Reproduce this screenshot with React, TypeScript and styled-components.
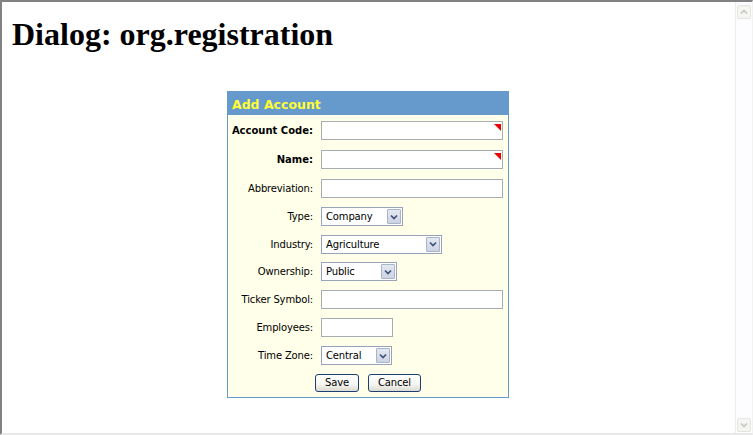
import React from "react";
import styled, { createGlobalStyle } from "styled-components";

const GlobalStyle = createGlobalStyle`
  html, body {
    margin: 0;
    padding: 0;
    background: #ffffff;
    overflow: hidden;
  }
`;

const Frame = styled.div`
  box-sizing: border-box;
  width: 753px;
  height: 435px;
  display: flex;
  border-top: 2px solid #828282;
  border-left: 2px solid #828282;
  border-right: 1px solid #f2f2f2;
  border-bottom: 2px solid #e9e9e9;
  background: #ffffff;
`;

const Page = styled.div`
  flex: 1;
  min-width: 0;
  padding: 14px 11px 0 10px;
`;

const Heading = styled.h1`
  margin: 0 0 38px;
  font-family: "Liberation Serif", "Times New Roman", serif;
  font-size: 32px;
  font-weight: bold;
  line-height: 37px;
  color: #000;
`;

const Dialog = styled.div`
  box-sizing: border-box;
  width: 282px;
  margin: 0 auto;
  border: 1px solid #6699cc;
  background: #ffffea;
  font-family: "DejaVu Sans", Tahoma, sans-serif;
  font-size: 10px;
  color: #000;
`;

const DialogTitle = styled.div`
  height: 23px;
  line-height: 23px;
  padding: 1px 0 0 4px;
  box-sizing: border-box;
  background: #6699cc;
  color: #ffff33;
  font-size: 12.5px;
  font-weight: bold;
`;

const Form = styled.div`
  padding-top: 1px;
`;

const Row = styled.div<{ $h: number }>`
  display: grid;
  grid-template-columns: 85px 1fr;
  column-gap: 8px;
  align-items: center;
  height: ${(p) => p.$h}px;
`;

const Label = styled.label<{ $required?: boolean }>`
  text-align: right;
  white-space: nowrap;
  font-weight: ${(p) => (p.$required ? "bold" : "normal")};
  letter-spacing: ${(p) => (p.$required ? "0" : "-0.15px")};
`;

const Field = styled.div<{ $w: number }>`
  position: relative;
  width: ${(p) => p.$w}px;
`;

const TextInput = styled.input`
  box-sizing: border-box;
  display: block;
  width: 100%;
  height: 19px;
  margin: 0;
  padding: 0 3px;
  border: 1px solid #a5acb2;
  background: #ffffff;
  font: inherit;
  outline: none;
`;

const RequiredMark = styled.span`
  position: absolute;
  top: 3px;
  right: 2px;
  width: 0;
  height: 0;
  border-top: 7px solid #ee0000;
  border-left: 7px solid transparent;
  pointer-events: none;
`;

const SelectBox = styled.div<{ $w: number }>`
  box-sizing: border-box;
  width: ${(p) => p.$w}px;
  height: 19px;
  display: flex;
  align-items: center;
  justify-content: space-between;
  border: 1px solid #97a3b8;
  background: #ffffff;
  padding: 0 1px 0 4px;
  letter-spacing: -0.15px;
`;

const SelectArrow = styled.span`
  box-sizing: border-box;
  width: 14px;
  height: 15px;
  display: flex;
  align-items: center;
  justify-content: center;
  border: 1px solid #aab4c8;
  border-radius: 1px;
  background: linear-gradient(#e4e8f2, #ccd3e3);
`;

const ButtonRow = styled.div`
  display: flex;
  justify-content: center;
  align-items: center;
  gap: 9px;
  height: 28px;
`;

const Button = styled.button`
  box-sizing: border-box;
  height: 18px;
  padding: 0 9px;
  margin: 0;
  border: 1px solid #1c3f73;
  border-radius: 3px;
  background: linear-gradient(#ffffff 0%, #f4f4f0 60%, #dcdad0 100%);
  font-family: "DejaVu Sans", Tahoma, sans-serif;
  font-size: 10px;
  letter-spacing: -0.15px;
  color: #000;
  line-height: 16px;
`;

const Scrollbar = styled.div`
  box-sizing: border-box;
  width: 17px;
  display: flex;
  flex-direction: column;
  justify-content: space-between;
  align-items: center;
  padding: 3px 0 1px;
  border-left: 1px solid #ececec;
  background: #fdfcff;
`;

const ScrollButton = styled.div`
  box-sizing: border-box;
  width: 14px;
  height: 14px;
  display: flex;
  align-items: center;
  justify-content: center;
  border: 1px solid #e4e4e0;
  border-radius: 2px;
  background: #f5f5f1;
`;

const Chevron = ({ up, color, size }: { up?: boolean; color: string; size: number }) => (
  <svg width={size} height={size} viewBox="0 0 8 8">
    <path
      d={up ? "M1 5.5 L4 2.5 L7 5.5" : "M1 2.5 L4 5.5 L7 2.5"}
      fill="none"
      stroke={color}
      strokeWidth={1.7}
    />
  </svg>
);

const Select = ({ value, w }: { value: string; w: number }) => (
  <SelectBox $w={w}>
    <span>{value}</span>
    <SelectArrow>
      <Chevron color="#3f5278" size={8} />
    </SelectArrow>
  </SelectBox>
);

export default function App() {
  return (
    <>
      <GlobalStyle />
      <Frame>
        <Page>
          <Heading>Dialog: org.registration</Heading>
          <Dialog>
            <DialogTitle>Add Account</DialogTitle>
            <Form>
              <Row $h={29}>
                <Label $required>Account Code:</Label>
                <Field $w={182}>
                  <TextInput />
                  <RequiredMark />
                </Field>
              </Row>
              <Row $h={29}>
                <Label $required>Name:</Label>
                <Field $w={182}>
                  <TextInput />
                  <RequiredMark />
                </Field>
              </Row>
              <Row $h={29}>
                <Label>Abbreviation:</Label>
                <Field $w={182}>
                  <TextInput />
                </Field>
              </Row>
              <Row $h={27}>
                <Label>Type:</Label>
                <Select value="Company" w={82} />
              </Row>
              <Row $h={28}>
                <Label>Industry:</Label>
                <Select value="Agriculture" w={121} />
              </Row>
              <Row $h={27}>
                <Label>Ownership:</Label>
                <Select value="Public" w={76} />
              </Row>
              <Row $h={28}>
                <Label>Ticker Symbol:</Label>
                <Field $w={182}>
                  <TextInput />
                </Field>
              </Row>
              <Row $h={29}>
                <Label>Employees:</Label>
                <Field $w={72}>
                  <TextInput />
                </Field>
              </Row>
              <Row $h={27}>
                <Label>Time Zone:</Label>
                <Select value="Central" w={71} />
              </Row>
              <ButtonRow>
                <Button>Save</Button>
                <Button>Cancel</Button>
              </ButtonRow>
            </Form>
          </Dialog>
        </Page>
        <Scrollbar>
          <ScrollButton>
            <Chevron up color="#c6c6c2" size={8} />
          </ScrollButton>
          <ScrollButton>
            <Chevron color="#c6c6c2" size={8} />
          </ScrollButton>
        </Scrollbar>
      </Frame>
    </>
  );
}
